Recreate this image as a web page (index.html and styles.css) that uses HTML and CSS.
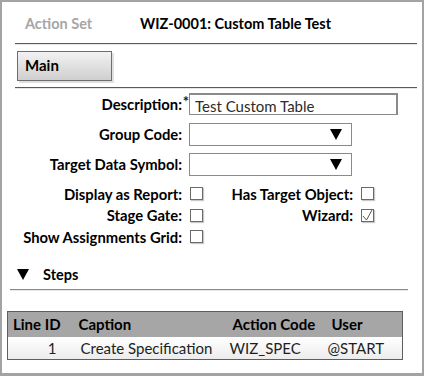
FILE: index.html
```html
<html>
<head>
  <title>Action Set</title>
  <meta name="viewport" content="width=device-width, initial-scale=1.0">
  <link rel="stylesheet" href="styles.css">
</head>
<body>
  <div class="frame">
    <div class="header">
      <span class="kind">Action Set</span>
      <span class="title">WIZ-0001: Custom Table Test</span>
    </div>
    <div class="rule"></div>
    <div class="tabs">
      <button class="tab">Main</button>
    </div>
    <div class="rule"></div>

    <div class="form">
      <div class="row row-field">
        <label class="lbl">Description:<span class="req">*</span></label>
        <input class="text-input" type="text" value="Test Custom Table">
      </div>
      <div class="row row-field">
        <label class="lbl">Group Code:</label>
        <div class="select"><span class="arrow"></span></div>
      </div>
      <div class="row row-field">
        <label class="lbl">Target Data Symbol:</label>
        <div class="select"><span class="arrow"></span></div>
      </div>

      <div class="checks">
        <div class="row row-check">
          <label class="lbl">Display as Report:</label>
          <span class="box"></span>
          <label class="lbl lbl-right">Has Target Object:</label>
          <span class="box"></span>
        </div>
        <div class="row row-check">
          <label class="lbl">Stage Gate:</label>
          <span class="box"></span>
          <label class="lbl lbl-right">Wizard:</label>
          <span class="box checked">
            <svg width="13" height="13" viewBox="0 0 13 13"><path d="M2 7 L5.5 11 L11 1" fill="none" stroke="#555" stroke-width="1"/></svg>
          </span>
        </div>
        <div class="row row-check">
          <label class="lbl">Show Assignments Grid:</label>
          <span class="box"></span>
        </div>
      </div>
    </div>

    <div class="section">
      <span class="toggle"></span>
      <span class="section-title">Steps</span>
    </div>
    <div class="rule rule-steps"></div>

    <table class="grid">
      <thead>
        <tr>
          <th class="c-id">Line ID</th>
          <th class="c-cap">Caption</th>
          <th class="c-code">Action Code</th>
          <th class="c-user">User</th>
        </tr>
      </thead>
      <tbody>
        <tr>
          <td class="c-id">1</td>
          <td class="c-cap">Create Specification</td>
          <td class="c-code">WIZ_SPEC</td>
          <td class="c-user">@START</td>
        </tr>
      </tbody>
    </table>
  </div>
</body>
</html>
```

FILE: styles.css
```css
body {
  margin: 0;
  background: #ffffff;
  font-family: Lato, 'Open Sans', sans-serif;
  font-size: 14.8px;
  color: #000000;
}
.frame {
  width: 424px;
  height: 376px;
  box-sizing: border-box;
  border: 2px solid #a3a3a3;
  border-bottom-width: 3px;
  padding-top: 1px;
}
.header {
  display: flex;
  align-items: center;
  height: 40px;
  padding-left: 23px;
  font-weight: bold;
  font-size: 14.5px;
}
.kind {
  color: #a6a6a6;
  width: 115px;
}
.title {
  color: #000000;
}
.rule {
  margin: 0 5px 0 13px;
  height: 1px;
  background: #5a5a5a;
  border-bottom: 1px solid #e6e6e6;
}
.tabs {
  padding: 6px 0 6px 15px;
  height: 30px;
}
.tab {
  width: 95px;
  height: 30px;
  box-sizing: border-box;
  border: 1px solid #6e6e6e;
  background: linear-gradient(#f2f2f2, #cfcfcf);
  box-shadow: 2px 2px 0 #e0e0e0;
  font-family: inherit;
  font-size: 15px;
  font-weight: bold;
  text-align: left;
  padding: 0 0 2px 7px;
  margin: 0;
  color: #000000;
}
.form {
  padding-top: 4px;
}
.row {
  display: flex;
  align-items: center;
}
.row-field {
  height: 22px;
  margin-bottom: 8px;
}
.lbl {
  width: 180px;
  text-align: right;
  font-weight: bold;
  position: relative;
  flex-shrink: 0;
}
.req {
  position: absolute;
  right: -7px;
  top: -3px;
  color: #1a1a1a;
}
.text-input {
  margin-left: 7px;
  width: 209px;
  height: 22px;
  box-sizing: border-box;
  border: 1px solid #8a8a8a;
  border-width: 2px 2px 1px 1px;
  padding: 2px 5px 0;
  font-family: inherit;
  font-size: 15px;
  color: #2b2b2b;
}
.select {
  margin-left: 7px;
  width: 163px;
  height: 23px;
  box-sizing: border-box;
  border: 1px solid #8a8a8a;
  display: flex;
  justify-content: flex-end;
  align-items: center;
  padding-right: 9px;
}
.arrow {
  width: 0;
  height: 0;
  border-left: 6px solid transparent;
  border-right: 6px solid transparent;
  border-top: 11px solid #000000;
}
.row-check {
  height: 21.5px;
}
.box {
  margin-left: 8px;
  width: 13px;
  height: 13px;
  box-sizing: border-box;
  border: 1px solid #6a6a6a;
  background: #ffffff;
  box-shadow: 1px 1px 1px #c8c8c8;
  flex-shrink: 0;
  display: flex;
}
.box svg {
  margin: -1px;
}
.lbl-right {
  width: 150px;
}
.section {
  display: flex;
  align-items: center;
  height: 18px;
  margin-top: 18px;
  padding-left: 15px;
  font-weight: bold;
}
.toggle {
  width: 0;
  height: 0;
  border-left: 6px solid transparent;
  border-right: 6px solid transparent;
  border-top: 11px solid #000000;
  margin-right: 14px;
}
.section-title {
  font-size: 14.5px;
}
.rule-steps {
  margin: 5px 14px 0 8px;
  background: #8a8a8a;
}
.grid {
  margin: 20px 0 0 5px;
  width: 396px;
  table-layout: fixed;
  border-collapse: collapse;
  border: 1px solid #5e5e5e;
  font-size: 15px;
}
.grid th,
.grid td {
  box-sizing: border-box;
  padding: 0;
}
.grid th {
  background: #a6a6a6;
  font-weight: bold;
  text-align: left;
  height: 26px;
}
.grid td {
  height: 22px;
  background: linear-gradient(#ffffff, #ececec);
  color: #1e1e1e;
}
.c-id {
  width: 70px;
}
.c-cap {
  width: 151px;
}
.c-code {
  width: 98px;
}
.grid th.c-id {
  padding-left: 5px;
}
.grid td.c-id {
  text-align: right;
  padding-right: 21px;
}
.grid th.c-cap {
  padding-left: 1px;
}
.grid td.c-cap {
  padding-left: 3px;
}
.grid th.c-code {
  padding-left: 4px;
}
.grid td.c-code {
  padding-left: 1px;
}
.grid th.c-user {
  padding-left: 5px;
}
.grid td.c-user {
  padding-left: 1px;
}
```
